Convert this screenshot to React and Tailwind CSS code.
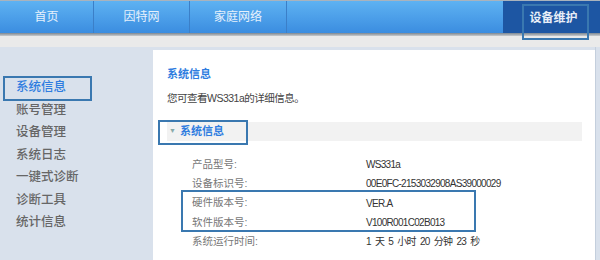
import React from "react";

const navItems = [
    { label: "首页", w: "w-[94px]" },
    { label: "因特网", w: "w-[96px]" },
    { label: "家庭网络", w: "w-[97px]" },
];

const sideItems = ["系统信息", "账号管理", "设备管理", "系统日志", "一键式诊断", "诊断工具", "统计信息"];

const rows = [
    ["产品型号:", "WS331a"],
    ["设备标识号:", "00E0FC-2153032908AS39000029"],
    ["硬件版本号:", "VER.A"],
    ["软件版本号:", "V100R001C02B013"],
    ["系统运行时间:", "1 天 5 小时 20 分钟 23 秒"],
];

const App = () => {
    return (
        <div
            className="relative w-[600px] h-[260px] overflow-hidden flex flex-col bg-[#d9e1ec]"
            style={{ fontFamily: '"Liberation Sans", "Noto Sans CJK SC", sans-serif' }}
        >
            {/* top nav */}
            <div className="h-[1px] bg-[#a9b3bd]" />
            <div className="h-[32px] flex bg-gradient-to-b from-[#5eb2f2] to-[#3b8de0]">
                {navItems.map((n) => (
                    <div
                        key={n.label}
                        className={`${n.w} flex items-center justify-center text-[12px] text-[#e6f1fc] border-r border-[#3b7fc8]`}
                    >
                        {n.label}
                    </div>
                ))}
                <div className="flex-1" />
                <div className="w-[97px] bg-[#1d56a3] flex items-start justify-center pt-[8px] pl-[4px] text-[12px] font-bold text-[#e8eef8]">
                    设备维护
                </div>
            </div>
            <div className="h-[3px] bg-gradient-to-b from-[#7d8791] to-[#c8cbce]" />
            <div className="h-[11px] bg-[#eaeaea]" />

            {/* body */}
            <div className="flex-1 flex">
                <div className="w-[153px] pt-[29px] pl-[16px]">
                    {sideItems.map((s, i) => (
                        <div
                            key={s}
                            className={`h-[22.5px] leading-[22.5px] text-[12.5px] font-medium ${i === 0 ? "text-[#2f7de0]" : "text-[#666]"}`}
                        >
                            {s}
                        </div>
                    ))}
                </div>

                <div className="flex-1 mt-[3px] bg-white pl-[14px] pr-[13px] pt-[17px]">
                    <div className="text-[11px] font-bold text-[#2f7de0] leading-[14px]">系统信息</div>
                    <div className="mt-[10px] text-[10.5px] tracking-[-0.5px] text-[#444] leading-[14px]">
                        您可查看WS331a的详细信息。
                    </div>
                    <div className="mt-[17px] h-[19px] bg-[#f2f2f2] flex items-center pl-[2px] text-[11px] font-bold text-[#2f7de0]">
                        <span className="text-[7px] text-[#8aa] mr-[4px]">▼</span>
                        系统信息
                    </div>
                    <div className="pt-[14px] pl-[25px]">
                        {rows.map(([k, v]) => (
                            <div key={k} className="flex h-[19.3px] items-center">
                                <span className="w-[174px] text-[10.5px] text-[#777]">{k}</span>
                                <span className="text-[10px] tracking-[-0.7px] [word-spacing:2px] text-[#333]">{v}</span>
                            </div>
                        ))}
                    </div>
                </div>
                <div className="w-[5px] border-l border-[#c4cfdd]" />
            </div>

            {/* highlight outlines */}
            <div className="absolute left-[522px] top-[4px] w-[67px] h-[36px] border-2 border-[#3a78b0]" />
            <div className="absolute left-[3px] top-[76px] w-[89px] h-[25px] border-2 border-[#3a78b0]" />
            <div className="absolute left-[158px] top-[120px] w-[90px] h-[25px] border-2 border-[#3a78b0]" />
            <div className="absolute left-[181px] top-[190px] w-[295px] h-[42px] border-2 border-[#3a78b0]" />
        </div>
    );
};

export default App;
